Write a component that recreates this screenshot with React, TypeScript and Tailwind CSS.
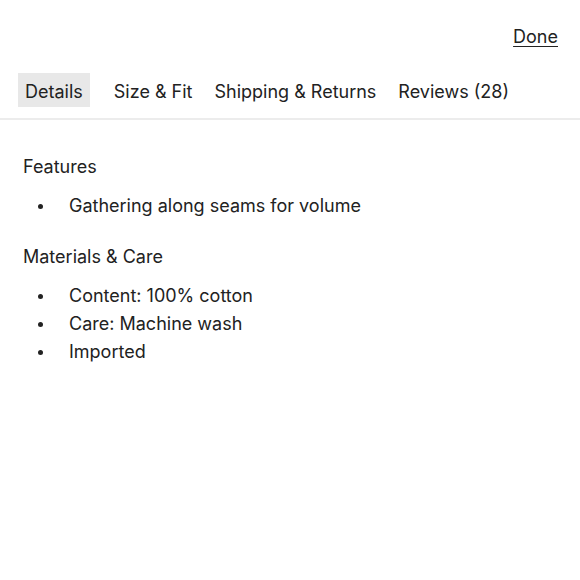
export default function App() {
  const tabs = ["Details", "Size & Fit", "Shipping & Returns", "Reviews (28)"];
  return (
    <div
      className="w-[580px] h-[580px] bg-white text-[#222] overflow-hidden"
      style={{ fontFamily: "Inter, 'Noto Sans', sans-serif" }}
    >
      <div className="flex justify-end pt-[9px] pr-[22px] h-[64px]">
        <button className="text-[18px] leading-[26px] underline underline-offset-[3px]">Done</button>
      </div>
      <div className="flex items-center gap-[10px] pl-[18px] pt-[9px] pb-[11px] border-b-2 border-[#ececec]">
        {tabs.map((t, i) => (
          <div
            key={t}
            className={`h-[34px] flex items-center text-[18px] pt-[2px] ${i === 0 ? "bg-[#e8e8e8] px-[7px] mr-[8px]" : "px-[6px]"}`}
          >
            {t}
          </div>
        ))}
      </div>
      <div className="px-[23px] pt-[34px] text-[18px]">
        <h3 className="leading-[26px]">Features</h3>
        <ul className="mt-[12px]">
          <li className="flex items-center leading-[28px]">
            <span className="w-[46px] pl-[15px]"><span className="block w-[5px] h-[5px] rounded-full bg-[#222]" /></span>
            Gathering along seams for volume
          </li>
        </ul>
        <h3 className="leading-[26px] mt-[24px]">Materials &amp; Care</h3>
        <ul className="mt-[12px]">
          {["Content: 100% cotton", "Care: Machine wash", "Imported"].map((x) => (
            <li key={x} className="flex items-center leading-[28px]">
              <span className="w-[46px] pl-[15px]"><span className="block w-[5px] h-[5px] rounded-full bg-[#222]" /></span>
              {x}
            </li>
          ))}
        </ul>
      </div>
    </div>
  );
}
